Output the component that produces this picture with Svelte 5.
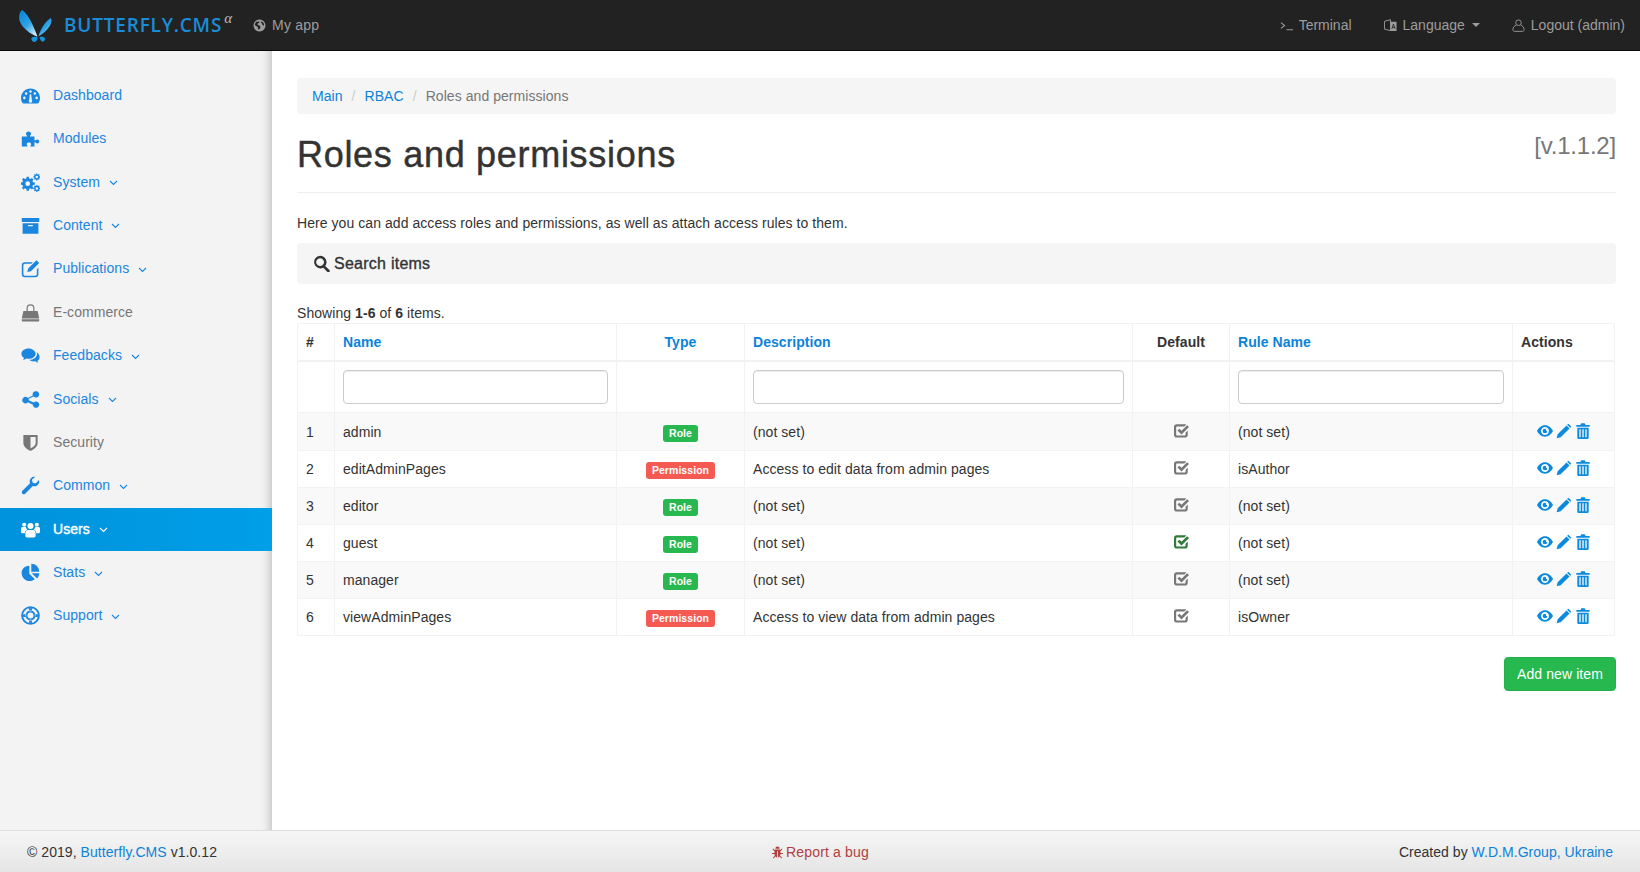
<script>
  // builds a gear outline as one subpath, with a round hole
  function gear(cx, cy, r, teeth, hole) {
    let d = "";
    const step = (Math.PI * 2) / teeth;
    for (let i = 0; i < teeth; i++) {
      const a = i * step;
      const pts = [
        [r * 0.76, a - step * 0.32],
        [r, a - step * 0.2],
        [r, a + step * 0.2],
        [r * 0.76, a + step * 0.32],
      ];
      for (const [q, t] of pts) {
        d += (d ? "L" : "M") + (cx + q * Math.cos(t)).toFixed(2) + " " + (cy + q * Math.sin(t)).toFixed(2);
      }
    }
    d += "z" + dot(cx, cy, hole);
    return d;
  }

  function dot(cx, cy, r) {
    return `M${cx - r} ${cy}a${r} ${r} 0 1 0 ${r * 2} 0a${r} ${r} 0 1 0 ${-r * 2} 0z`;
  }

  const icons = {
    dashboard:
      "M12 3C5.4 3 0 8.300 0 15c0 2.300.6 4.300 1.700 6.200.3.5.7.8 1.300.8h18c.6 0 1-.3 1.300-.8 1.100-1.900 1.700-3.900 1.700-6.200 0-6.700-5.400-12-12-12z" +
      dot(4.2, 15, 1.6) + dot(6.5, 9.5, 1.6) + dot(12, 7, 1.6) + dot(19.8, 15, 1.6) + dot(17.5, 9.5, 1.6) +
      "M10.300 17.500l.9-7h1.600l.9 7a2.200 2.200 0 1 1-3.400 0z",
    puzzle:
      "M1 9.500h6c.8 0 .8-.7.3-1.300C6.500 7.300 6.200 6.700 6.200 6c0-1.800 1.400-3 3.300-3s3.300 1.200 3.300 3c0 .7-.3 1.300-1.100 2.200-.5.6-.5 1.300.3 1.300H17v4.500c0 .8.7.8 1.300.3.900-.8 1.500-1.100 2.200-1.100 1.800 0 2.500 1 2.500 2.500s-.7 2.500-2.500 2.500c-.7 0-1.300-.3-2.200-1.100-.6-.5-1.300-.5-1.300.3V22h-4.500c-.8 0-.8-.7-.3-1.300.4-.5.6-1 .6-1.500 0-1.200-1.200-2-2.800-2s-2.800.8-2.800 2c0 .5.2 1 .6 1.500.5.6.5 1.300-.3 1.300H1z",
    cogs: gear(8.5, 13.5, 9, 8, 3) + gear(20, 5, 4.5, 8, 1.6) + gear(20, 19.5, 4.5, 8, 1.6),
    archive: "M1 2.500h22V7.500H1zM2 9h20v13.500H2zM9 11.500v1.500h6v-1.500z",
    edit:
      "M5 4h10l-2 2H5a2 2 0 0 0-2 2v11a2 2 0 0 0 2 2h13a2 2 0 0 0 2-2v-6l2-2v8a4 4 0 0 1-4 4H5a4 4 0 0 1-4-4V8a4 4 0 0 1 4-4z" +
      "M19.500 1.500l3.500 3.500-10.500 10.500-4.500 1 1-4.500z",
    bag:
      "M3 10h18l2 9.500H1zM1 20.500h22V22.500a1 1 0 0 1-1 1H2a1 1 0 0 1-1-1zM7 10V6.500a5 5 0 0 1 10 0V10h-1.500V6.500a3.500 3.500 0 0 0-7 0V10z",
    comments:
      "M9.500 3C4.500 3 .5 6 .5 9.800c0 2.200 1.400 4.200 3.400 5.400-.3 1-.9 1.900-1.700 2.700 1.700-.2 3.300-.9 4.500-2 .9.200 1.800.3 2.800.3 5 0 9-3 9-6.400S14.500 3 9.500 3z" +
      "M20 8.500c.2.500.3 1 .3 1.500 0 4.200-4.400 7.300-9.800 7.400 1.400 1.300 3.400 2.100 5.600 2.100.7 0 1.400-.1 2-.2 1 .9 2.300 1.700 3.900 2-.6-.7-1.100-1.600-1.400-2.500 1.800-1 2.900-2.600 2.900-4.400 0-2.600-1.300-4.900-3.500-6.400z",
    share:
      "M19 1.500a4 4 0 1 1-3 6.700l-6.300 3a4 4 0 0 1 0 1.700l6.300 3a4 4 0 1 1-1 2.600l-6.300-3a4 4 0 1 1 0-5.400l6.300-3A4 4 0 0 1 19 1.500z",
    shield: "M3 2.500h18v10c0 5-5.500 8.500-9 10-3.500-1.500-9-5-9-10zM12 5v14.500c2.500-1.300 6.500-3.800 6.500-7V5z",
    wrench:
      "M17 1c-3.300 0-6 2.700-6 6 0 .8.1 1.500.4 2.200L1.500 19.100a2.500 2.500 0 0 0 3.500 3.500l9.900-9.900c.7.300 1.400.4 2.100.4 3.300 0 6-2.700 6-6 0-.7-.1-1.300-.3-1.900L18.500 9.500l-3.700-1-1-3.700 4.300-3.700C17.700 1 17.300 1 17 1z",
    users:
      dot(12, 7.5, 3.8) + dot(4, 6, 2.6) + dot(20, 6, 2.6) +
      "M0 10.500c0-1 1-1.800 2-1.800h4c.3 1.500 1 2.600 2 3.300-2 .9-3.200 2.800-3.300 4.800H2c-1 0-2-.5-2-2zM24 10.500c0-1-1-1.800-2-1.800h-4c-.3 1.500-1 2.600-2 3.300 2 .9 3.200 2.800 3.300 4.800H22c1 0 2-.5 2-2z" +
      "M9 12.500h6c2.200 0 3.500 2 3.500 4.500v3c0 1.300-1 2-2 2h-9c-1 0-2-.7-2-2v-3c0-2.500 1.300-4.500 3.500-4.500z",
    pie:
      "M10.500 3.500v10l7 7c-1.800 1.500-4 2.200-6.500 2.200C5.400 22.700.8 18.100.8 12.500.8 7.500 5 3.500 10.500 3.500zM13 1c5.500 0 10 4.500 10 10H13zM13.500 13H23c0 2.500-.9 4.800-2.500 6.600z",
    life:
      dot(12, 12, 11.8) + dot(12, 12, 9.4) + dot(12, 12, 6.4) + dot(12, 12, 3.8) +
      "M10 2.700h4l-.5 3.800h-3zM10 21.300h4l-.5-3.800h-3zM2.700 10v4l3.800-.5v-3zM21.300 10v4l-3.800-.5v-3z",
    globe:
      "M12 1a11 11 0 1 0 .01 0zM7 5c1.500.5 2.500-.5 4-.5s1.500 1.500 0 2.500-3 1.500-2.500 3 3 1 4 2.500 2 3.500 0 5.500-1.500 2.500-2.500 1-.5-3-2-4.500S3.500 12 3.500 10.500 5.500 4.500 7 5zM16 4.500c2 .5 4.500 3.500 4.500 6.500 0 1.500-1.500 1.500-2.500.5s-.5-2.500-2-3.500-1.500-3.500 0-3.500z",
    search:
      "M10 1a9 9 0 0 1 7.200 14.400l5.900 5.900a1.900 1.900 0 0 1-2.700 2.700l-5.900-5.900A9 9 0 1 1 10 1zm0 3.500a5.500 5.500 0 1 0 .01 0z",
    eye:
      "M12 3.500C6.500 3.500 2.500 7.500 0 12c2.500 4.500 6.500 8.500 12 8.500s9.500-4 12-8.500c-2.500-4.500-6.500-8.500-12-8.500zM12 6a6 6 0 1 1-.01 0zM12 8.500a3.500 3.500 0 1 0 3.500 3.500 1.500 1.500 0 0 1-2-2 1.500 1.500 0 0 0-1.500-1.500z",
    pencil: "M18.500 1l4.500 4.500L21.200 7.300l-4.500-4.500zM15.800 3.700l4.500 4.500L7 21.500 1 23l1.500-6z",
    trash:
      "M8 3L9.500 .5h5L16 3h6v2.500H2V3zM3.500 7h17v15a2 2 0 0 1-2 2h-13a2 2 0 0 1-2-2zM6.500 9.500V21.500h2V9.500zM11 9.500V21.500h2V9.500zM15.500 9.500V21.500h2V9.500z",
    check:
      "M4.500 2h13c.8 0 1.500.2 2.100.5l-3 3H4.500A1.200 1.200 0 0 0 3.500 6.700v12.100a1.200 1.200 0 0 0 1 1.200h13a1.200 1.200 0 0 0 1-1.200v-3.300l3.500-3.500v6.800a4.500 4.500 0 0 1-4.500 4.500h-13A4.500 4.500 0 0 1 0 18.800V6.500A4.500 4.500 0 0 1 4.500 2z" +
      "M21 3.500l3 3L12 18.500 5.500 12l3-3 3.500 3.500z",
    bug:
      "M8 5a4 4 0 0 1 8 0zM7 6.500h10v1.200l3-3 1.200 1.200L17.500 9.700V13H22v1.700h-4.500c0 1.200-.3 2.300-.8 3.200l4 4-1.200 1.200-3.700-3.700c-1 1-2.200 1.600-3 1.600V9.500h-1.600V21c-.8 0-2-.6-3-1.600L4.500 23.100 3.300 21.900l4-4c-.5-.9-.8-2-.8-3.200H2V13h4.500V9.700L2.800 5.900 4 4.700l3 3z",
  };

  const menu = [
    { label: "Dashboard", icon: "dashboard" },
    { label: "Modules", icon: "puzzle" },
    { label: "System", icon: "cogs", sub: true },
    { label: "Content", icon: "archive", sub: true },
    { label: "Publications", icon: "edit", sub: true },
    { label: "E-commerce", icon: "bag", off: true },
    { label: "Feedbacks", icon: "comments", sub: true },
    { label: "Socials", icon: "share", sub: true },
    { label: "Security", icon: "shield", off: true },
    { label: "Common", icon: "wrench", sub: true },
    { label: "Users", icon: "users", sub: true, active: true },
    { label: "Stats", icon: "pie", sub: true },
    { label: "Support", icon: "life", sub: true },
  ];

  const rows = [
    { name: "admin", type: "Role", desc: "(not set)", rule: "(not set)" },
    { name: "editAdminPages", type: "Permission", desc: "Access to edit data from admin pages", rule: "isAuthor" },
    { name: "editor", type: "Role", desc: "(not set)", rule: "(not set)" },
    { name: "guest", type: "Role", desc: "(not set)", rule: "(not set)", isDefault: true },
    { name: "manager", type: "Role", desc: "(not set)", rule: "(not set)" },
    { name: "viewAdminPages", type: "Permission", desc: "Access to view data from admin pages", rule: "isOwner" },
  ];
</script>

{#snippet icon(name, cls)}
  <svg class={cls} viewBox="0 0 24 24" aria-hidden="true"><path d={icons[name]} fill="currentColor" fill-rule="evenodd" /></svg>
{/snippet}

<div class="page">
  <header class="navbar">
    <a class="brand" href="#top">
      <svg class="logo" viewBox="17 8 34 34" aria-hidden="true">
        <defs>
          <linearGradient id="wing" x1="0.1" y1="0" x2="0.8" y2="1">
            <stop offset="0" stop-color="#0a86d6" />
            <stop offset="0.55" stop-color="#2fa3e6" />
            <stop offset="1" stop-color="#d4eefb" />
          </linearGradient>
        </defs>
        <path fill="url(#wing)" d="M21 9C18 11 17.500 17 19 21c2.500 6 10 12 17.500 14.500C33 27 28 13 21 9z" />
        <path fill="url(#wing)" d="M50 17c-4 1.500-11 11-12.500 18.500C43 32 50 26 50.500 20c0-1-.2-2.500-.5-3z" />
        <path fill="#1593de" d="M36.500 36c-2-.5-5-.5-6 1-.7 1.500 1 4 3 4 2 0 3-3 3-5z" />
        <path fill="#1593de" d="M38.500 36c2-.5 4.500-.2 5.300 1 .7 1.500-.8 4-2.500 3.700-1.500-.3-2.500-3-2.800-4.700z" />
      </svg>
      <span class="brand-text">BUTTERFLY.CMS</span><sup class="alpha">α</sup>
    </a>
    <a class="nav-link app" href="#top">{@render icon("globe", "nav-icon")}My app</a>
    <nav class="nav-right">
      <a class="nav-link" href="#top">
        <svg class="nav-icon" viewBox="0 0 14 14" aria-hidden="true"><path d="M1 4l4 3-4 3M7 11.500h7" fill="none" stroke="currentColor" stroke-width="1.100" /></svg>
        Terminal
      </a>
      <a class="nav-link" href="#top">
        <svg class="nav-icon" viewBox="0 0 14 14" aria-hidden="true">
          <path d="M.5 2.500L7 .8v11.700L.5 11z" fill="none" stroke="currentColor" />
          <path d="M7 3h6.500v10H6l1-.5z" fill="currentColor" />
          <path d="M8.500 10.500l1.700-5 1.700 5M9.200 9h2" fill="none" stroke="#222" stroke-width=".9" />
        </svg>
        Language<span class="caret"></span>
      </a>
      <a class="nav-link" href="#top">
        <svg class="nav-icon" viewBox="0 0 14 14" aria-hidden="true"><circle cx="7" cy="4" r="3" fill="none" stroke="currentColor" /><path d="M4.500 6.500C2.500 7.500 1 9 1 11.500c0 1 .5 1.800 1.500 1.800h9c1 0 1.500-.8 1.500-1.800 0-2.500-1.500-4-3.500-5" fill="none" stroke="currentColor" /></svg>
        Logout (admin)
      </a>
    </nav>
  </header>

  <div class="body">
    <aside class="sidebar">
      <ul>
        {#each menu as item}
          <li class:active={item.active} class:off={item.off}>
            {@render icon(item.icon, "menu-icon")}
            <span>{item.label}</span>
            {#if item.sub}
              <svg class="chevron" viewBox="0 0 9 6" aria-hidden="true"><path d="M1 1l3.500 3.500L8 1" fill="none" stroke="currentColor" stroke-width="1.100" /></svg>
            {/if}
          </li>
        {/each}
      </ul>
    </aside>

    <main class="content">
      <ol class="breadcrumb">
        <li><a href="#top">Main</a></li>
        <li><a href="#top">RBAC</a></li>
        <li class="current">Roles and permissions</li>
      </ol>

      <div class="page-header">
        <h1>Roles and permissions</h1>
        <small>[v.1.1.2]</small>
      </div>

      <p class="lead">Here you can add access roles and permissions, as well as attach access rules to them.</p>

      <div class="search-panel">{@render icon("search", "search-icon")}Search items</div>

      <div class="summary">Showing <b>1-6</b> of <b>6</b> items.</div>

      <table>
        <colgroup>
          <col style="width: 37px" />
          <col style="width: 282px" />
          <col style="width: 128px" />
          <col style="width: 388px" />
          <col style="width: 97px" />
          <col style="width: 283px" />
          <col style="width: 102px" />
        </colgroup>
        <thead>
          <tr class="head">
            <th>#</th>
            <th><a href="#top">Name</a></th>
            <th class="center"><a href="#top">Type</a></th>
            <th><a href="#top">Description</a></th>
            <th class="center">Default</th>
            <th><a href="#top">Rule Name</a></th>
            <th>Actions</th>
          </tr>
          <tr class="filters">
            <td></td>
            <td><input type="text" /></td>
            <td></td>
            <td><input type="text" /></td>
            <td></td>
            <td><input type="text" /></td>
            <td></td>
          </tr>
        </thead>
        <tbody>
          {#each rows as row, i}
            <tr>
              <td>{i + 1}</td>
              <td>{row.name}</td>
              <td class="center"><span class="label" class:danger={row.type === "Permission"}>{row.type}</span></td>
              <td>{row.desc}</td>
              <td class="center"><span class="flag" class:on={row.isDefault}>{@render icon("check", "check-icon")}</span></td>
              <td>{row.rule}</td>
              <td class="center">
                <span class="actions">
                  {@render icon("eye", "act")}
                  {@render icon("pencil", "act")}
                  {@render icon("trash", "act")}
                </span>
              </td>
            </tr>
          {/each}
        </tbody>
      </table>

      <div class="toolbar"><button type="button">Add new item</button></div>
    </main>
  </div>

  <footer class="footer">
    <div>© 2019, <a href="#top">Butterfly.CMS</a> v1.0.12</div>
    <div class="bug">{@render icon("bug", "bug-icon")}Report a bug</div>
    <div class="created">Created by <a href="#top">W.D.M.Group, Ukraine</a></div>
  </footer>
</div>

<style>
  :global(body) {
    margin: 0;
    font-family: "Liberation Sans", Arial, sans-serif;
    font-size: 14px;
    line-height: 20px;
    letter-spacing: 0.06px;
    color: #333;
    background: #fff;
  }

  a {
    color: #0b83d9;
    text-decoration: none;
  }

  .page {
    display: flex;
    flex-direction: column;
    height: 872px;
    overflow: hidden;
  }

  .navbar {
    flex: none;
    display: flex;
    align-items: center;
    height: 50px;
    border-bottom: 1px solid #080808;
    background: #222;
    padding: 0 15px 0 18px;
  }

  .brand {
    display: flex;
    align-items: center;
    color: #1a8cd8;
  }

  .logo {
    width: 34px;
    height: 34px;
    margin-top: 1px;
    margin-right: 12px;
  }

  .brand-text {
    font-family: "Open Sans", sans-serif;
    font-size: 19px;
    font-weight: 600;
    letter-spacing: 0.8px;
  }

  .alpha {
    align-self: flex-start;
    margin: 3px 0 0 2px;
    font-family: "Liberation Serif", serif;
    font-style: italic;
    font-size: 15px;
    line-height: 14px;
    color: #bbb;
  }

  .nav-link {
    display: flex;
    align-items: center;
    color: #9d9d9d;
  }

  .app {
    margin-left: 21px;
    letter-spacing: 0.2px;
  }

  .nav-icon {
    width: 13px;
    height: 13px;
    margin-right: 6px;
  }

  .nav-right {
    display: flex;
    gap: 32px;
    margin-left: auto;
    letter-spacing: 0;
  }

  .caret {
    margin-left: 7px;
    border-top: 4px solid currentColor;
    border-left: 4px solid transparent;
    border-right: 4px solid transparent;
  }

  .body {
    flex: 1;
    display: flex;
    min-height: 0;
  }

  .sidebar {
    flex: none;
    width: 272px;
    background: #f3f3f3;
    box-shadow: inset -12px 0 10px -10px rgba(0, 0, 0, 0.22);
  }

  .sidebar ul {
    list-style: none;
    margin: 0;
    padding: 22.6px 0 0;
  }

  .sidebar li {
    display: flex;
    align-items: center;
    height: 43.4px;
    padding-left: 21px;
    color: #1a86e0;
  }

  .sidebar li span {
    margin-bottom: 1px;
  }

  .sidebar li.off {
    color: #777;
  }

  .sidebar li.active {
    color: #fff;
    -webkit-text-stroke: 0.4px #fff;
    background: linear-gradient(to right, #0092dc, #009fe8);
  }

  :global(.menu-icon) {
    flex: none;
    width: 19px;
    height: 19px;
    margin-right: 13px;
  }

  .chevron {
    width: 9px;
    height: 6px;
    margin-left: 9px;
    margin-top: 2px;
  }

  .content {
    flex: 1;
    min-width: 0;
    padding: 27px 24px 0 25px;
  }

  .breadcrumb {
    display: flex;
    list-style: none;
    margin: 0;
    padding: 8px 15px;
    background: #f5f5f5;
    border-radius: 4px;
  }

  .breadcrumb li + li::before {
    content: "/";
    padding: 0 9px;
    color: #ccc;
  }

  .current {
    color: #777;
  }

  .page-header {
    display: flex;
    justify-content: space-between;
    height: 78px;
    border-bottom: 1px solid #eee;
  }

  h1 {
    margin: 21px 0 0;
    font-size: 36px;
    font-weight: normal;
    line-height: 40px;
    letter-spacing: 0.7px;
    -webkit-text-stroke: 0.45px #333;
  }

  .page-header small {
    margin-top: 19px;
    font-size: 24px;
    line-height: 26px;
    letter-spacing: -0.2px;
    color: #777;
  }

  .lead {
    margin: 20px 0 10px;
  }

  .search-panel {
    display: flex;
    align-items: center;
    height: 41px;
    padding-left: 16px;
    background: #f5f5f5;
    border-radius: 4px;
    font-size: 16px;
    letter-spacing: 0.25px;
    -webkit-text-stroke: 0.35px #333;
  }

  :global(.search-icon) {
    width: 17px;
    height: 17px;
    margin-right: 4px;
  }

  .summary {
    margin-top: 19px;
    height: 20px;
  }

  table {
    width: 1317px;
    table-layout: fixed;
    border-collapse: collapse;
  }

  th,
  td {
    padding: 8px;
    border: 1px solid #f2f2f2;
    text-align: left;
    line-height: 20px;
    white-space: nowrap;
  }

  thead .head th {
    border-bottom-width: 2px;
    height: 20px;
  }

  th.center,
  td.center {
    text-align: center;
  }

  tbody td {
    padding-top: 6px;
    padding-bottom: 6px;
  }

  tbody tr {
    height: 37px;
  }

  tbody tr:first-child {
    height: 38px;
  }

  tbody tr:nth-child(odd) {
    background: #f9f9f9;
  }

  input {
    display: block;
    box-sizing: border-box;
    width: 100%;
    height: 34px;
    padding: 6px 12px;
    border: 1px solid #ccc;
    border-radius: 4px;
    background: #fff;
    box-shadow: inset 0 1px 1px rgba(0, 0, 0, 0.075);
  }

  .label {
    display: inline-block;
    vertical-align: top;
    margin: 3px 0 -3px;
    padding: 3px 6px;
    border-radius: 3px;
    font-size: 10.5px;
    font-weight: bold;
    line-height: 11px;
    color: #fff;
    background: #27b84f;
  }

  .label.danger {
    background: #f55a52;
  }

  .flag {
    display: block;
    height: 20px;
    color: #777;
  }

  .flag.on {
    color: #2f7a3a;
  }

  :global(.check-icon) {
    display: block;
    width: 15px;
    height: 15px;
    margin: 2px auto 0;
  }

  .actions {
    display: flex;
    justify-content: center;
    align-items: center;
    gap: 3px;
    height: 20px;
    margin-top: -2px;
    color: #0b8ade;
  }

  :global(.act) {
    width: 16px;
    height: 16px;
  }

  .toolbar {
    display: flex;
    justify-content: flex-end;
    margin-top: 21px;
  }

  button {
    height: 34px;
    padding: 0 12px;
    border: 1px solid #25b04b;
    border-radius: 4px;
    background: #27b84f;
    color: #fff;
    font: inherit;
    letter-spacing: 0.1px;
  }

  .footer {
    flex: none;
    display: grid;
    grid-template-columns: 1fr 1fr 1fr;
    align-items: center;
    height: 40px;
    padding: 1px 27px 0;
    border-top: 1px solid #ddd;
    background: linear-gradient(#f6f6f6, #e5e5e5);
  }

  .bug {
    display: flex;
    justify-content: center;
    align-items: center;
    letter-spacing: 0.15px;
    color: #b0413e;
  }

  :global(.bug-icon) {
    width: 13px;
    height: 13px;
    margin-right: 2px;
  }

  .created {
    text-align: right;
    letter-spacing: 0.03px;
  }
</style>
